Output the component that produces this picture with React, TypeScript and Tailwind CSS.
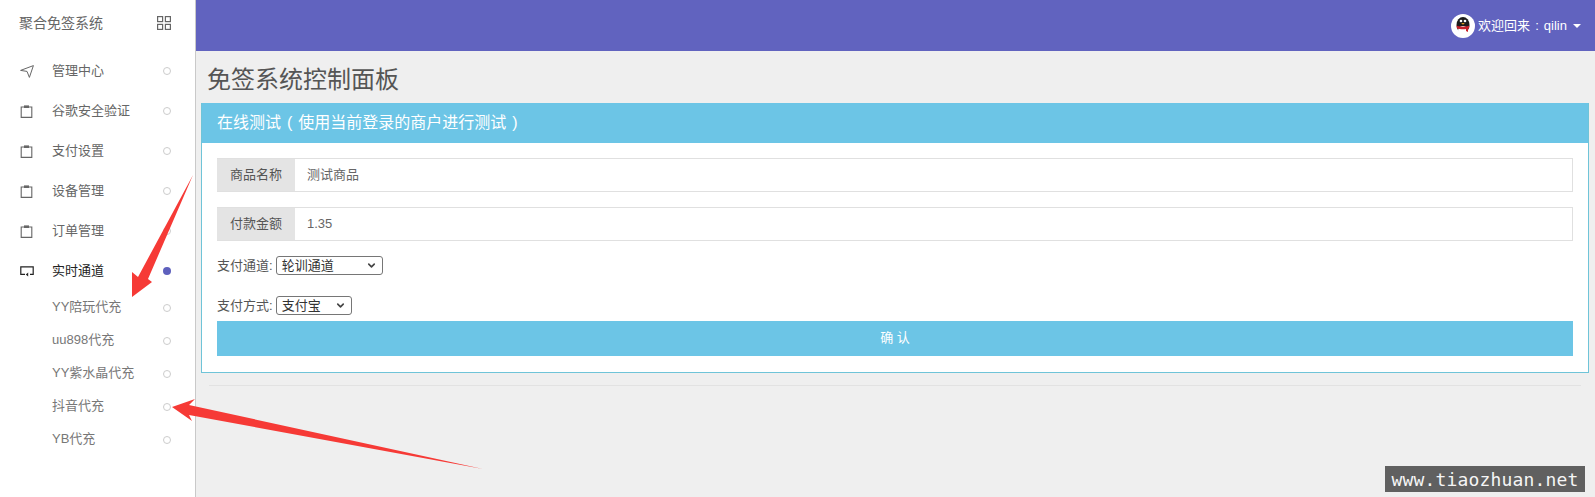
import { ChevronDown } from "lucide-react"

const FONT = "[font-family:'Liberation_Sans','Noto_Sans_CJK_SC',sans-serif]"

function GridIcon() {
  return (
    <svg width="14" height="14" viewBox="0 0 14 14" fill="none" stroke="#666" strokeWidth="1.2">
      <rect x="0.6" y="0.6" width="5" height="5" />
      <rect x="8.4" y="0.6" width="5" height="5" />
      <rect x="0.6" y="8.4" width="5" height="5" />
      <rect x="8.4" y="8.4" width="5" height="5" />
    </svg>
  )
}

function PlaneIcon() {
  return (
    <svg width="14" height="13" viewBox="0 0 14 13" fill="none" stroke="#666" strokeWidth="1">
      <path d="M0.6 5.4L13.4 0.6L9.4 12.4L7 6.4Z" strokeLinejoin="round" />
    </svg>
  )
}

function BagIcon() {
  return (
    <svg width="13" height="13" viewBox="0 0 13 13" fill="none" stroke="#666" strokeWidth="1.1">
      <path d="M4 2H1.2V12.4H11.8V2H9" />
      <rect x="4" y="0.4" width="5" height="2.6" fill="#666" stroke="none" />
    </svg>
  )
}

function ScreenIcon() {
  return (
    <svg width="14" height="11" viewBox="0 0 14 11" fill="none" stroke="#222" strokeWidth="1.2">
      <path d="M5 8.4H0.8V0.8H13.2V8.4H10" />
      <path d="M8.2 6.4V10.4L5.8 8.4Z" fill="#222" stroke="none" />
    </svg>
  )
}

function QqAvatar() {
  return (
    <svg width="24" height="24" viewBox="0 0 24 24" className="mr-[3px]">
      <circle cx="12" cy="12" r="12" fill="#fff" />
      <ellipse cx="12" cy="11" rx="6.5" ry="8" fill="#1c1c1c" />
      <ellipse cx="12" cy="16.5" rx="5" ry="4.5" fill="#fff" />
      <path d="M5.5 11.5C8 13 16 13 18.5 11.5L18 14.5C15 15.5 9 15.5 6 14.5Z" fill="#c8202a" />
      <path d="M15 14L17 14L17 18L15 17Z" fill="#c8202a" />
      <circle cx="10" cy="7" r="1.3" fill="#fff" />
      <circle cx="14" cy="7" r="1.3" fill="#fff" />
      <path d="M10.2 9H13.8L12 10.8Z" fill="#e8a020" />
    </svg>
  )
}

function Dot({ active }: { active?: boolean }) {
  return (
    <span
      className={
        active
          ? "size-2 rounded-full bg-[#5e60bd] shrink-0"
          : "size-2 rounded-full border border-[#cccccc] bg-white shrink-0"
      }
    />
  )
}

function NavItem({ label, icon, active }: { label: string; icon: React.ReactNode; active?: boolean }) {
  return (
    <div className={`flex items-center h-10 pl-5 pr-6 text-[13px] ${active ? "text-[#222]" : "text-[#666]"}`}>
      <span className="w-[32px] shrink-0">{icon}</span>
      <span className="flex-1">{label}</span>
      <Dot active={active} />
    </div>
  )
}

function SubItem({ label }: { label: string }) {
  return (
    <div className="flex items-center h-[33px] pl-[52px] pr-6 text-[13px] text-[#777]">
      <span className="flex-1 -translate-y-px">{label}</span>
      <Dot />
    </div>
  )
}

function InputRow({ label, value }: { label: string; value: string }) {
  return (
    <div className="flex h-[34px] text-[13px]">
      <div className="w-[78px] flex items-center justify-center bg-[#e4e4e4] text-[#555] border-y border-[#e0e0e0]">{label}</div>
      <div className="flex-1 flex items-center px-3 bg-white text-[#666] border border-l-0 border-[#e0e0e0]">{value}</div>
    </div>
  )
}

function SelectBox({ value, width }: { value: string; width: string }) {
  return (
    <span className={`inline-flex items-center justify-between h-[19px] pl-[5px] pr-[5px] ml-[3px] border border-[#767676] rounded-[3px] bg-white text-[#333] ${width}`}>
      {value}
      <ChevronDown size={11} strokeWidth={3.5} className="text-[#444]" />
    </span>
  )
}

export default function App() {
  return (
    <div className={`relative flex w-[1595px] h-[497px] overflow-hidden bg-[#efefef] ${FONT}`}>
      <aside className="w-[196px] shrink-0 bg-white border-r border-[#c9c9c9]">
        <div className="flex items-center justify-between h-[46px] pl-[19px] pr-6 text-[14px] text-[#666]">
          <span>聚合免签系统</span>
          <GridIcon />
        </div>
        <div className="mt-[5px]">
          <NavItem label="管理中心" icon={<PlaneIcon />} />
          <NavItem label="谷歌安全验证" icon={<BagIcon />} />
          <NavItem label="支付设置" icon={<BagIcon />} />
          <NavItem label="设备管理" icon={<BagIcon />} />
          <NavItem label="订单管理" icon={<BagIcon />} />
          <NavItem label="实时通道" active icon={<ScreenIcon />} />
          <SubItem label="YY陪玩代充" />
          <SubItem label="uu898代充" />
          <SubItem label="YY紫水晶代充" />
          <SubItem label="抖音代充" />
          <SubItem label="YB代充" />
        </div>
      </aside>

      <main className="flex-1 min-w-0">
        <header className="flex items-center justify-end h-[51px] pr-[14px] bg-[#6163bf] text-[13px] text-white">
          <QqAvatar />
          <span className="[word-spacing:1.5px]">欢迎回来 : qilin</span>
          <span className="ml-[6px] w-0 h-0 border-x-4 border-x-transparent border-t-4 border-t-white" />
        </header>

        <div className="pl-[5px] pr-[6px]">
          <h1 className="h-[52px] pl-[6px] pt-[5px] flex items-center text-2xl font-normal text-[#555]">免签系统控制面板</h1>
          <section className="border border-[#6fc4d8] border-t-0 bg-white">
            <div className="flex items-center h-10 pl-[15px] bg-[#6cc5e6] text-[16px] text-white [word-spacing:1.5px]">在线测试 ( 使用当前登录的商户进行测试 )</div>
            <div className="px-[15px] pt-[15px] pb-4 text-[13px]">
              <InputRow label="商品名称" value="测试商品" />
              <div className="mt-[15px]">
                <InputRow label="付款金额" value="1.35" />
              </div>
              <div className="flex items-center h-[19px] mt-[15px] text-[#555]">
                支付通道:
                <SelectBox value="轮训通道" width="w-[107px]" />
              </div>
              <div className="flex items-center h-[19px] mt-[21px] text-[#555]">
                支付方式:
                <SelectBox value="支付宝" width="w-[76px]" />
              </div>
              <button className="flex items-center justify-center w-full h-[35px] mt-[6px] pb-[2px] bg-[#6cc5e6] text-white text-[13px]">确 认</button>
            </div>
          </section>
          <div className="mt-3 mx-2 border-t border-[#e2e2e2]" />
        </div>
      </main>

      <svg width="1595" height="497" className="absolute inset-0 pointer-events-none">
        <path d="M193 175L148 279L152 282L132 297L132 272L138 277Z" fill="#f63a36" />
        <path d="M172 407L195 399L189 405L483 469L189 415L192 421Z" fill="#f63a36" />
      </svg>

      <div className="absolute left-[1385px] top-[466px] w-[200px] h-[26px] flex items-center justify-center bg-[#606060] text-[#f5f5f5] text-[18px] tracking-[0.15px] [font-family:'DejaVu_Sans_Mono',monospace]">
        www.tiaozhuan.net
      </div>
    </div>
  )
}
